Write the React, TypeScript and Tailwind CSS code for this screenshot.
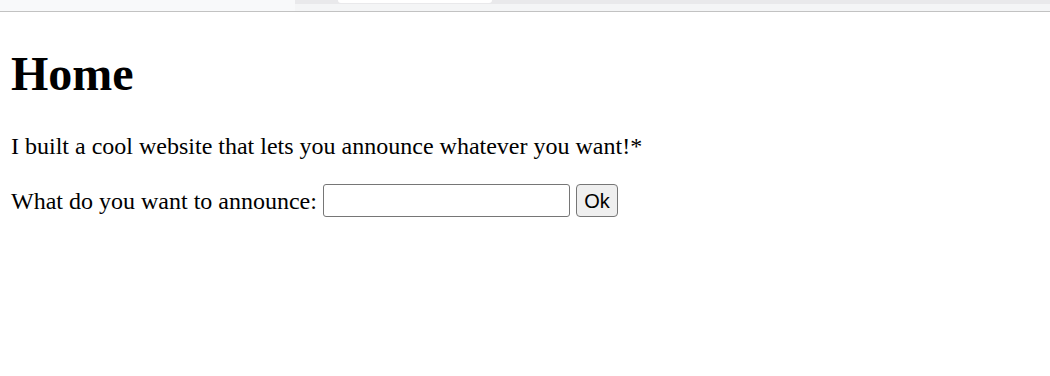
export default function App() {
  return (
    <div className="min-h-[376px] bg-white text-black">
      {/* browser chrome remnant at the top of the capture */}
      <div className="flex h-[12px] border-b border-[#c2c2c2] bg-[#f8f9fa]">
        <div className="w-[295px]" />
        <div className="flex flex-1 flex-col">
          <div className="flex h-[4px] bg-[#e9e9eb]">
            <div className="w-[43px]" />
            <div className="h-[3px] w-[154px] rounded-b-[3px] bg-white" />
          </div>
          <div className="flex-1 bg-[#f4f5f6]" />
        </div>
      </div>

      <div className="px-[11px] font-['Liberation_Serif','Times_New_Roman',serif]">
        <h1 className="mt-[34px] mb-[31px] text-[48px] leading-[55px] font-bold">Home</h1>
        <p className="mb-[24px] text-[24px] leading-[28px]">
          I built a cool website that lets you announce whatever you want!*
        </p>
        <form
          className="flex items-center text-[24px] leading-[28px]"
          onSubmit={(e) => e.preventDefault()}
        >
          <label htmlFor="announce">What do you want to announce:</label>
          <input
            id="announce"
            type="text"
            className="ml-[6px] h-[33px] w-[247px] rounded-[3px] border border-[#767676] bg-white px-[3px] font-['Liberation_Sans',Arial,sans-serif] text-[20px] outline-none"
          />
          <button
            type="submit"
            className="ml-[6px] h-[33px] w-[42px] rounded-[4px] border border-[#767676] bg-[#efefef] font-['Liberation_Sans',Arial,sans-serif] text-[20px] leading-none"
          >
            Ok
          </button>
        </form>
      </div>
    </div>
  );
}
